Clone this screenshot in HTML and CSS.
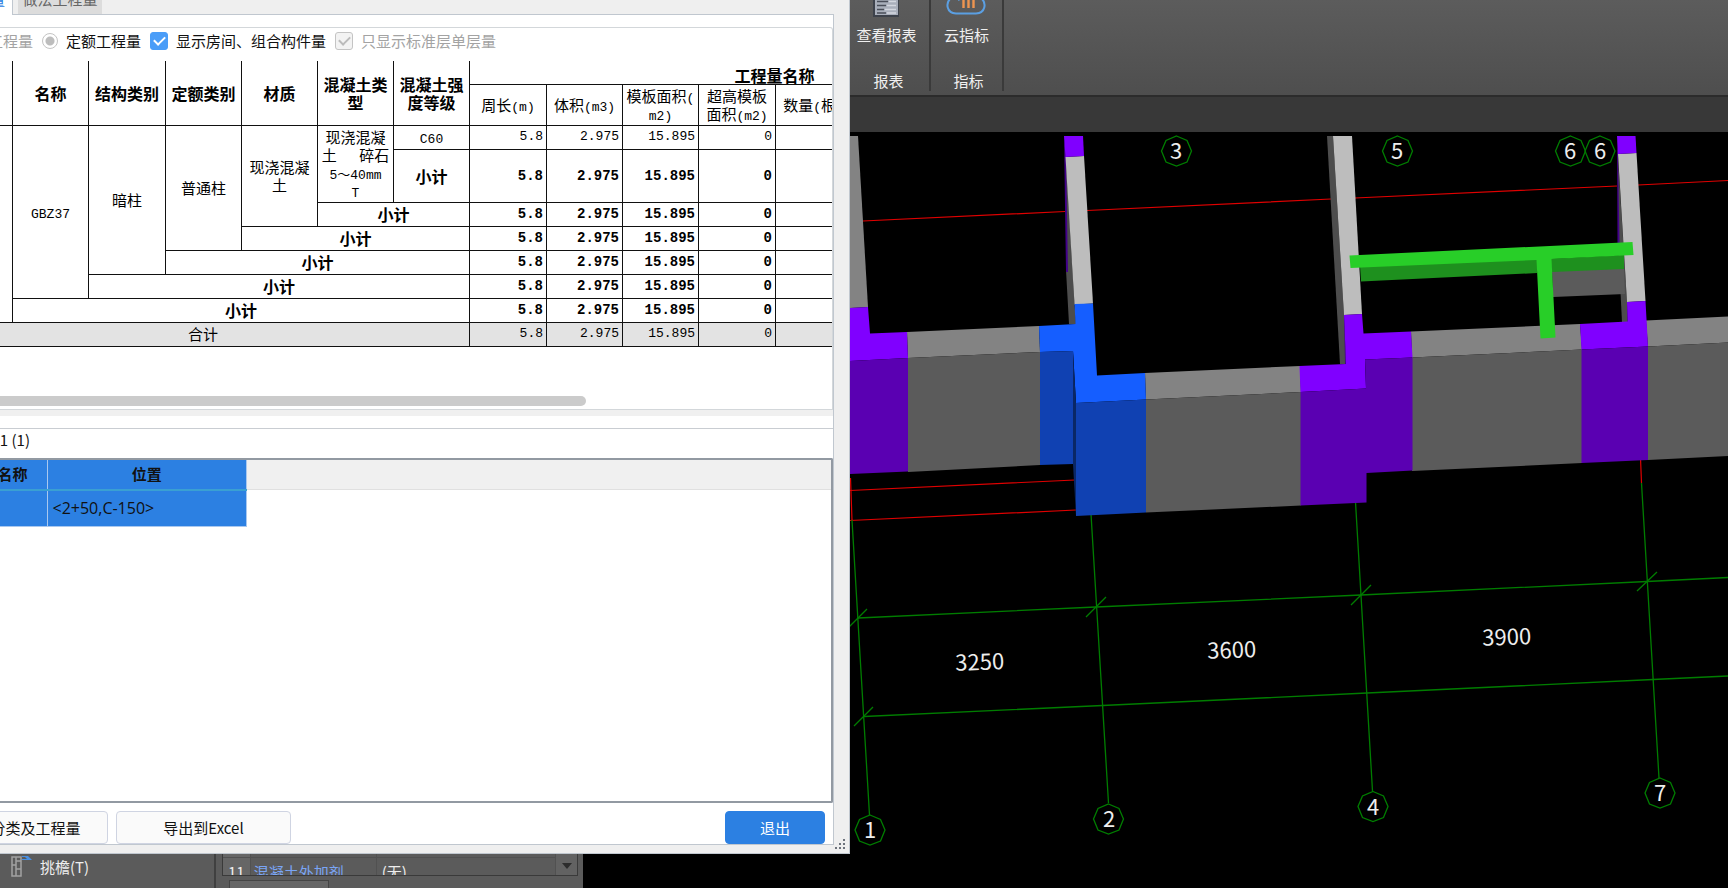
FILE: index.html
```html
<!DOCTYPE html>
<html lang="zh-CN">
<head>
<meta charset="utf-8">
<title>查看工程量</title>
<link rel="stylesheet" href="styles.css">
</head>
<body>
<div class="app">
  <header class="ribbon">
    <section class="ribbon-group">
      <button class="ribbon-button" type="button">
        <svg class="ribbon-icon" width="28" height="17" viewBox="0 0 28 17" aria-hidden="true">
          <path fill="#3d424b" d="M1 0h26v17H1z"/><path fill="#a9afbb" d="M3 0h23v15H3z"/>
          <path stroke="#4a4f5a" stroke-width="1.4" d="M5 1.5h11M5 5.5h9M5 9.5h7M5 13h9"/>
          <path stroke="#d3d7df" stroke-width="1.4" d="M17 1.5h7M15 5.5h9M13 9.5h11M15 13h9"/>
        </svg>
        <span>查看报表</span>
      </button>
      <span class="ribbon-caption">报表</span>
    </section>
    <section class="ribbon-group">
      <button class="ribbon-button" type="button">
        <svg class="ribbon-icon" width="40" height="17" viewBox="0 0 40 17" fill="none" aria-hidden="true">
          <path stroke="#5b9fe2" stroke-width="2" d="M4 -1C0 3 0 13 10 13.500H30C40 13 40 3 36 -1M12 0l2-1"/>
          <path stroke="#ee9550" stroke-width="2.400" d="M17.500 0v8M22.500 0v8M27.500 0v8"/>
        </svg>
        <span>云指标</span>
      </button>
      <span class="ribbon-caption">指标</span>
    </section>
  </header>
  <div class="toolbar"></div>
  <main class="workspace">
    <aside class="side">
      <div class="tree">
        <svg width="22" height="22" viewBox="0 0 22 22" fill="none" aria-hidden="true">
          <path stroke="#a2a2a2" stroke-width="1.500" d="M1 1h9v19H1zM5 1v19M5 5h5M1 9h4M5 13h5"/>
          <path fill="#4a90e2" d="M11 0h6l4 4H11V3h5l-2-2h-3z"/>
        </svg>
        <span>挑檐(T)</span>
      </div>
      <div class="props">
        <div class="props-grid">
          <table class="props-table">
            <tr><th>10</th><td class="prop-name">泵送类型</td><td>(泵送)</td></tr>
            <tr><th>11</th><td class="prop-name">混凝土外加剂</td><td>(无)</td></tr>
          </table>
          <div class="props-scroll"><svg width="10" height="6" viewBox="0 0 10 6" aria-hidden="true"><path fill="#2c2c2c" d="M0 0h10L5 6z"/></svg></div>
        </div>
        <div class="props-tab"></div>
      </div>
    </aside>
    <svg class="scene" viewBox="583 132 1145 756" preserveAspectRatio="xMinYMin slice" role="img" aria-label="三维视图">
      <g class="red-line">
        <path d="M863 221L1065 211.500M1087 210.500L1331 199M1355 198L1617 186M1638 185L1728 180.500M850 490.500L1075 480M850 520.500L1076 510M850.500 478L852 520M1640.500 458L1641.500 483"/>
      </g>
      <g class="axis">
        <path d="M852 520L869.500 815M1091 514L1108.500 803M1355.500 502L1372.500 791M1641.500 483L1659 778"/>
        <path d="M858 618L1096 607L1361 595L1647 581.500L1728 577.500M864 716.500L1102.500 705.500L1367 693L1653 679.500L1728 676"/>
        <path d="M848 628L867 609M1086 617L1106 597M854 726L873 707M1351 605L1371 585M1637 591L1657 572"/>
      </g>
      <g class="wall-side">
        <path d="M1066 158L1074.500 304L1076 324H1069L1066 270z"/>
        <path d="M1327 136H1333L1344 315L1346 364H1340z"/>
        <path d="M1618 158L1627 302L1627.500 322H1622L1618 242z"/>
      </g>
      <path class="shade" d="M1064 136L1066 157L1068 272H1066zM1617 136L1618 154L1619.500 243H1617.500zM1344 315L1346 364H1345z"/>
      <g class="wall-top">
        <path d="M1065.500 157L1084 156L1093 303.500L1074.500 304.500z"/>
        <path d="M1333 136H1352L1362 314L1344 315z"/>
        <path d="M1618 154L1636.500 153L1645.500 301L1627 302z"/>
      </g>
      <g class="gray-top">
        <path d="M850 136H858L868 307L850 308z"/>
        <path d="M907 332L1039 326L1040 352L908 358z"/>
        <path d="M1145 373L1300 366L1301 392L1146 399.500z"/>
        <path d="M1411 331.500L1580 324L1582 349.500L1412 357.500z"/>
        <path d="M1646 320.500L1728 316.500V342.500L1648 346.500z"/>
      </g>
      <g class="gray-front">
        <path d="M908 358L1040 352V465L908 472z"/>
        <path d="M1146 399.500L1301 392V505.500L1146 512.500z"/>
        <path d="M1412 357.500L1582 349.500V463L1412 471z"/>
        <path d="M1648 346.500L1728 342.500V456L1648 460z"/>
        <path d="M1552 271L1624 268L1625 294L1553 297z"/>
      </g>
      <g class="purple-top">
        <path d="M850 308L868 307L870 333.500L907 332L908 358L850 361z"/>
        <path d="M1064 136H1083L1084 156L1065.500 157z"/>
        <path d="M1299.500 366L1346 364L1344 315L1362 314L1363.500 333.500L1411 331.500L1412.500 357.500L1365 359.500L1366 388.500L1300.500 392z"/>
        <path d="M1617 136H1635.500L1636.500 153L1618 154z"/>
        <path d="M1580 324L1627.500 321.500L1627 302L1645.500 301L1648 346.500L1581.500 349.500z"/>
      </g>
      <g class="purple-front">
        <path d="M850 361L908 358V471.500L850 474z"/>
        <path d="M1300.500 392L1366 388.500L1365 359.500L1412.500 357.500V470.500L1366.500 473V502.500L1300.500 505.500z"/>
        <path d="M1581.500 349.500L1648 346.500V460L1581.500 463z"/>
      </g>
      <path class="blue-top" d="M1039 326L1075.500 324L1074.500 304L1093 303.500L1097 375.500L1145 373L1146 399.500L1076 403L1073 351L1040 352z"/>
      <path class="blue-front" d="M1040 352L1073 351V464L1040 465zM1076 403L1146 399.500V512.500L1076 516z"/>
      <path class="blue-side" d="M1073 351L1076 403V516L1073 464z"/>
      <path class="green-front" d="M1360 266L1537 259V273L1361 281.500zM1550 259L1624 255V269L1552 272z"/>
      <path class="green-top" d="M1349.500 255.500L1632.500 242L1633.500 255L1551.500 259L1555.500 337.500L1540.500 338.500L1536.500 260L1350.500 268z"/>
      <defs><path id="bubble" d="M0-15L10.500-10.500L15 0L10.500 11L0 15L-10.500 11L-15 0L-10.500-10.500z"/></defs>
      <g class="bubbles">
        <use href="#bubble" x="1176.500" y="151"/><use href="#bubble" x="1397.500" y="151"/>
        <use href="#bubble" x="1570.500" y="151"/><use href="#bubble" x="1600" y="151"/>
        <use href="#bubble" x="870" y="830"/><use href="#bubble" x="1108.500" y="819"/>
        <use href="#bubble" x="1373" y="806.500"/><use href="#bubble" x="1660" y="793"/>
      </g>
      <g class="bubble-text">
        <text x="1176" y="159">3</text><text x="1397" y="159">5</text><text x="1570" y="159">6</text><text x="1600" y="159">6</text>
        <text x="870" y="838">1</text><text x="1109" y="827">2</text><text x="1373" y="815">4</text><text x="1660" y="801">7</text>
      </g>
      <g class="dim-text">
        <text x="980" y="670" transform="rotate(-2 980 670)">3250</text>
        <text x="1232" y="658" transform="rotate(-2 1232 658)">3600</text>
        <text x="1507" y="645" transform="rotate(-2 1507 645)">3900</text>
      </g>
    </svg>
  </main>

  <section class="dialog" role="dialog" aria-label="查看构件图元工程量">
    <nav class="tabs">
      <button class="tab tab-active" type="button">构件工程量</button>
      <button class="tab" type="button">做法工程量</button>
    </nav>
    <div class="pane">
      <div class="quantities">
        <div class="options">
          <label class="option muted"><input type="radio" name="kind" disabled>清单工程量</label>
          <label class="option"><input type="radio" name="kind" checked>定额工程量</label>
          <label class="option"><input type="checkbox" checked>显示房间、组合构件量</label>
          <label class="option muted"><input type="checkbox" checked disabled>只显示标准层单层量</label>
        </div>
        <table class="report">
          <colgroup>
            <col><col><col class="wide"><col><col><col><col><col class="wide"><col><col><col class="wide"><col><col><col><col>
          </colgroup>
          <thead>
            <tr><th rowspan="2">楼层</th><th rowspan="2">名称</th><th rowspan="2">结构类别</th><th rowspan="2">定额类别</th><th rowspan="2">材质</th><th rowspan="2">混凝土类型</th><th rowspan="2">混凝土强度等级</th><th colspan="8" class="group-title">工程量名称</th></tr>
            <tr class="units"><td>周长<span class="lat">(m)</span></td><td>体积<span class="lat">(m3)</span></td><td>模板面积<span class="lat">(<br>m2)</span></td><td>超高模板<br>面积<span class="lat">(m2)</span></td><td>数量<span class="lat">(</span>根<span class="lat">)</span></td><td></td><td></td><td></td></tr>
          </thead>
          <tbody>
            <tr><td rowspan="7"></td><td rowspan="6"><span class="lat">GBZ37</span></td><td rowspan="5">暗柱</td><td rowspan="4">普通柱</td><td rowspan="3">现浇混凝<br>土</td><td rowspan="2">现浇混凝<br>土&emsp;&ensp;碎石<br><span class="lat">5～40mm</span><br><span class="lat">T</span></td><td><span class="lat">C60</span></td><td class="num">5.8</td><td class="num">2.975</td><td class="num">15.895</td><td class="num">0</td><td></td><td></td><td></td><td></td></tr>
            <tr class="sub tall"><th>小计</th><td class="num">5.8</td><td class="num">2.975</td><td class="num">15.895</td><td class="num">0</td><td></td><td></td><td></td><td></td></tr>
            <tr class="sub"><th colspan="2">小计</th><td class="num">5.8</td><td class="num">2.975</td><td class="num">15.895</td><td class="num">0</td><td></td><td></td><td></td><td></td></tr>
            <tr class="sub"><th colspan="3">小计</th><td class="num">5.8</td><td class="num">2.975</td><td class="num">15.895</td><td class="num">0</td><td></td><td></td><td></td><td></td></tr>
            <tr class="sub"><th colspan="4">小计</th><td class="num">5.8</td><td class="num">2.975</td><td class="num">15.895</td><td class="num">0</td><td></td><td></td><td></td><td></td></tr>
            <tr class="sub"><th colspan="5">小计</th><td class="num">5.8</td><td class="num">2.975</td><td class="num">15.895</td><td class="num">0</td><td></td><td></td><td></td><td></td></tr>
            <tr class="sub"><th colspan="6">小计</th><td class="num">5.8</td><td class="num">2.975</td><td class="num">15.895</td><td class="num">0</td><td></td><td></td><td></td><td></td></tr>
            <tr class="total"><td colspan="7">合计</td><td class="num">5.8</td><td class="num">2.975</td><td class="num">15.895</td><td class="num">0</td><td></td><td></td><td></td><td></td></tr>
          </tbody>
        </table>
        <div class="scrollbar"><div class="thumb"></div></div>
      </div>
      <div class="splitter"></div>
      <div class="details">
        <div class="details-title">1 (1)</div>
        <div class="list">
          <div class="list-head"></div>
          <table class="positions">
            <tr><th class="name-col">名称</th><th class="pos-col">位置</th></tr>
            <tr><td></td><td class="pos-col">&lt;2+50,C-150&gt;</td></tr>
          </table>
        </div>
      </div>
      <footer class="actions">
        <button class="button" type="button">设置分类及工程量</button>
        <button class="button" type="button">导出到Excel</button>
        <button class="button primary" type="button">退出</button>
      </footer>
    </div>
    <svg class="grip" width="10" height="10" viewBox="0 0 10 10" aria-hidden="true"><path fill="#6d737c" d="M8 0h2v2H8zM4 4h2v2H4zM8 4h2v2H8zM0 8h2v2H0zM4 8h2v2H4zM8 8h2v2H8z"/></svg>
  </section>
</div>
</body>
</html>
```
FILE: styles.css
```css
* { box-sizing: border-box; }
body {
  margin: 0;
  font-family: "Noto Sans CJK SC", sans-serif;
  font-size: 15px;
  line-height: 18px;
  color: #111;
}
button { font: inherit; color: inherit; border: 0; padding: 0; background: none; }
svg { display: block; }

.app {
  position: relative;
  height: 100vh;
  display: flex;
  flex-direction: column;
  overflow: hidden;
  background: #000;
}

/* Ribbon */
.ribbon {
  flex: none;
  height: 97px;
  display: flex;
  align-items: flex-start;
  padding-left: calc(50% - 14px);
  background: linear-gradient(#5c5c5c, #4e4e4e);
  border-bottom: 2px solid #2b2b2b;
  color: #f0f0f0;
}
.ribbon-group {
  width: 81px;
  height: 91px;
  padding-right: 6px;
  display: flex;
  flex-direction: column;
  align-items: center;
  border-right: 2px solid #3a3a3a;
}
.ribbon-group + .ribbon-group { width: 73px; padding-right: 0; }
.ribbon-button {
  display: flex;
  flex-direction: column;
  align-items: center;
  gap: 9px;
  white-space: nowrap;
}
.ribbon-caption { margin-top: 28px; padding-left: 4px; }
.toolbar { flex: none; height: 35px; background: #383838; }

/* Workspace */
.workspace {
  flex: 1;
  min-height: 0;
  display: grid;
  grid-template-columns: 583px 1fr;
}
.side { display: flex; align-items: flex-end; background: #5b5b5b; color: #eee; }
.tree {
  width: 216px;
  height: 34px;
  padding: 2px 0 0 11px;
  display: flex;
  align-items: flex-start;
  gap: 7px;
  border-right: 2px solid #404040;
}
.tree span { padding-top: 2px; }
.props { flex: 1; height: 60px; padding: 0 5px 0 6px; }
.props-grid {
  height: 48px;
  display: flex;
  overflow: hidden;
  border: 1px solid #3a3a3a;
  border-width: 0 1px 1px;
}
.props-table { flex: 1; border-collapse: collapse; table-layout: fixed; }
.props-table tr { height: 29px; }
.props-table th, .props-table td { padding: 0 5px; text-align: left; font-weight: 400; border-right: 1px solid #515151; border-bottom: 1px solid #515151; }
.props-table th { width: 27px; background: #666; }
.props-table .prop-name { width: 126px; padding: 0 3px; color: #7aa5f5; }
.props-scroll { width: 21px; padding: 35px 0 0 6px; background: #626262; }
.props-tab { width: 100px; height: 8px; margin: 4px 0 0 7px; border: 1px solid #444; border-bottom: 0; background: #666; }
.scene { width: 100%; height: 100%; background: #000; }

/* Model view */
.red-line { fill: none; stroke: #e00000; stroke-width: 1.2; }
.axis, .bubbles { fill: none; stroke: #007d00; stroke-width: 1.3; }
.wall-side { fill: #4d4d4d; }
.wall-top { fill: #bdbdbd; }
.gray-top { fill: #838383; }
.gray-front { fill: #5b5b5b; }
.purple-top { fill: #8000ff; }
.purple-front { fill: #5a00b2; }
.shade { fill: #42008a; }
.blue-top { fill: #155eff; }
.blue-front { fill: #1041b2; }
.blue-side { fill: #0a2766; }
.green-top { fill: #28ce28; }
.green-front { fill: #1e901e; }
.bubble-text, .dim-text { fill: #eee; font-size: 22px; text-anchor: middle; }

/* Dialog window */
.dialog {
  position: absolute;
  top: -14px;
  bottom: 34px;
  left: -80px;
  width: calc(50% + 66px);
  display: flex;
  flex-direction: column;
  padding: 0 15px 8px 0;
  background: #efefef;
  border: 1px solid #c0c7cf;
  border-width: 0 1px 1px 0;
}
.tabs { flex: none; height: 28px; display: flex; }
.tab { width: 84px; height: 28px; margin-left: 5px; padding-bottom: 2px; background: #dcdcdc; color: #666; }
.tab-active {
  position: relative;
  width: 93px;
  height: 29px;
  margin-left: 0;
  padding-right: 7px;
  text-align: right;
  background: #fff;
  border-right: 1px solid #c0c7cf;
  color: #2c80e2;
}
.pane {
  flex: 1;
  min-height: 0;
  display: flex;
  flex-direction: column;
  padding-top: 12px;
  background: #fff;
  border: 1px solid #c0c7cf;
  border-left: 0;
}
.quantities {
  flex: none;
  overflow: hidden;
  border: 1px solid #d3d7da;
  border-left: 0;
  border-top-right-radius: 3px;
}
.options { height: 25px; margin-bottom: 8px; padding-left: 14px; display: flex; align-items: center; gap: 9px; white-space: nowrap; }
.option { display: flex; align-items: center; gap: 8px; }
.muted { color: #a3a3a3; }
.option input { appearance: none; margin: 0; width: 18px; height: 18px; border: 1px solid #c4c4c4; border-radius: 3px; background: #f3f3f3; }
.option input[type="radio"] { width: 16px; height: 16px; border-radius: 50%; background: #fff; }
.option input[type="radio"]:checked { background: radial-gradient(circle, #bdbdbd 4px, #fff 5px); }
.option input[type="checkbox"] { display: grid; place-items: center; }
.option input[type="checkbox"]::before {
  content: "";
  width: 5px;
  height: 9px;
  margin-bottom: 2px;
  border: solid #bbb;
  border-width: 0 2px 2px 0;
  transform: rotate(45deg);
}
.option input[type="checkbox"]:enabled { background: #4a9df8; border-color: #4a9df8; }
.option input[type="checkbox"]:enabled::before { border-color: #fff; }

/* Quantity table */
.report { width: 1143px; margin: 0 0 49px 16px; table-layout: fixed; border-collapse: collapse; text-align: center; color: #000; }
.report col { width: 76px; }
.report .wide { width: 77px; }
.report th, .report td { padding: 0 3px; border: 1px solid #111; }
.report thead tr:first-child th { border-top: 0; }
.report th { font-size: 16px; font-weight: 700; }
.report tr { height: 24px; }
.report thead tr { height: 23px; }
.report thead .units { height: 41px; }
.report .tall { height: 53px; }
.report .group-title { vertical-align: bottom; }
.lat, .report .num { font-family: "Liberation Mono", "Noto Sans CJK SC", monospace; font-size: 13px; }
.lat { line-height: 1px; }
.report .num { text-align: right; }
.report .sub .num { font-size: 14px; font-weight: 700; }
.report .total td { background: #e3e3e3; }
.scrollbar { height: 13px; }
.thumb { width: 73%; height: 10px; border-radius: 0 5px 5px 0; background: #cbcbcb; }
.splitter { flex: none; height: 6px; background: #f0f0f0; }

/* Element list */
.details { flex: 1; min-height: 0; margin-top: 12px; display: flex; flex-direction: column; border-top: 1px solid #c9cdd2; }
.details-title { width: 110px; height: 29px; padding-top: 2px; text-align: right; }
.list { flex: 1; position: relative; border: 2px solid #9299a2; border-left: 0; border-radius: 0 2px 2px 0; }
.list-head { height: 30px; background: #f0f0f0; border-bottom: 1px solid #e0e0e0; }
.positions { position: absolute; top: 0; left: 0; width: 327px; table-layout: fixed; border-collapse: collapse; background: #2c80e2; }
.positions th, .positions td { padding: 0 19px 0 4px; border: 1px solid #a9c8ef; border-width: 0 1px 1px 0; text-align: right; }
.positions th { height: 30px; border-bottom: 2px solid #3aa0d2; }
.positions td { height: 37px; }
.positions .name-col { width: 127px; }
.positions th.pos-col { padding: 0; text-align: center; }
.positions td.pos-col { padding-left: 5px; text-align: left; font-family: "Open Sans", "Noto Sans CJK SC", sans-serif; font-size: 16px; }

/* Dialog buttons */
.actions { flex: none; display: flex; gap: 8px; padding: 8px 8px 0 13px; }
.button { width: 175px; height: 33px; border: 1px solid #cfd4e2; border-radius: 4px; background: #fafafa; }
.primary { width: 100px; margin-left: auto; background: #2c80e2; border-color: #2c80e2; color: #fff; }
.grip { position: absolute; right: 4px; bottom: 4px; }
```
